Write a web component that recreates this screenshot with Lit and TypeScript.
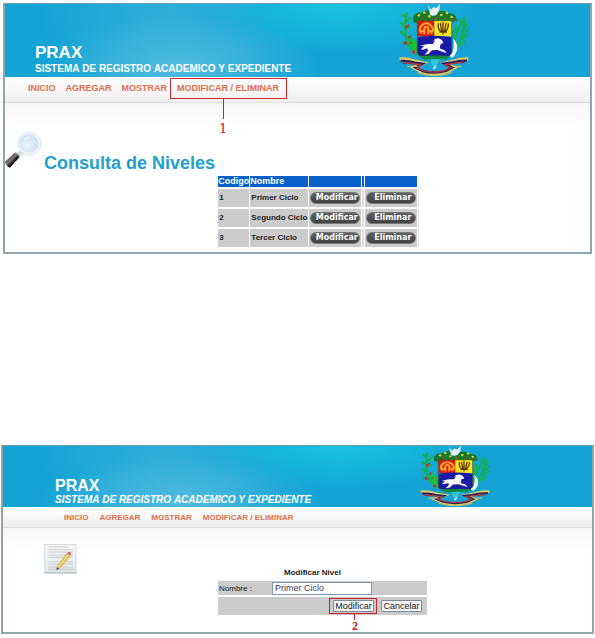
import { LitElement, html, css } from "lit";
import { customElement, property } from "lit/decorators.js";

@customElement("national-crest")
class NationalCrest extends LitElement {
  static styles = css`
    :host { display: block; width: 70px; }
    svg { display: block; width: 100%; height: 100%; }
  `;
  render() {
    return html`<svg viewBox="0 0 210 216" preserveAspectRatio="none" role="img" aria-label="Escudo">
      <g fill="none" stroke="#18b04a" stroke-linecap="round">
        <path stroke-width="7" d="M50 150C20 125 12 85 22 28M22 40l-12-8M20 55l14-12M17 66L5 58M17 80l15-12M18 94L6 84M23 110l14-14M27 122l-17-8M37 137l14-18"/>
        <path stroke-width="6" d="M160 140C185 120 196 85 196 42M164 130C168 95 178 70 190 52M188 80l16-18M185 98l22-22M180 112l26-20M172 130l26-18M172 82l-4-16M166 108l-4-28M190 60l-6-14"/>
      </g>
      <path d="M30 106c12-8 22 4 25 14v32c-16-4-22-19-25-46z" fill="#18c238"/>
      <g fill="#b8324a"><circle cx="22" cy="69" r="5"/><circle cx="31" cy="99" r="4"/><circle cx="19" cy="117" r="5"/><circle cx="44" cy="144" r="5"/><circle cx="28" cy="64" r="3"/><circle cx="36" cy="116" r="3"/></g>
      <path d="M42 40q4-16 26-14l14-8 25 6 26-4 16 8q20 0 22 14l4 8-12 4-10-4H64l-12 8-10-4z" fill="#137a2c"/>
      <g fill="#e8c832"><circle cx="60" cy="34" r="4"/><circle cx="76" cy="26" r="4"/><circle cx="91" cy="37" r="4"/><circle cx="127" cy="33" r="4"/><circle cx="144" cy="27" r="4"/><circle cx="158" cy="39" r="4"/></g>
      <g fill="#cf332c"><circle cx="69" cy="43" r="3"/><circle cx="110" cy="44" r="4"/><circle cx="140" cy="43" r="3"/><circle cx="167" cy="48" r="3"/></g>
      <path d="M86 3l10 14 7-8 8 4 12-12-2 17-8 14q-12 6-20 0l-2-14z" fill="#e6eff6"/>
      <path d="M55 50h51v47H55z" fill="#dd1713"/>
      <path d="M106 50h52v47h-52z" fill="#ffe51b"/>
      <path d="M55 100q51-9 103 0v45q0 11-11 11H66q-11 0-11-11z" fill="#1b1aa5"/>
      <path d="M55 50v95q0 11 11 11h81q11 0 11-11V50z" fill="none" stroke="#36551e" stroke-width="2"/>
      <path d="M69 88q-10-6-5-18 8-12 18-12t18 12q5 12-5 18M76 91V75a6 7 0 0 1 12 0v16M66 81h11m10 0h12" fill="none" stroke="#ffa326" stroke-width="6"/>
      <path d="M118 58q-3 22 14 27 17-5 16-27M132 54v38M124 57l5 29M141 57l-5 29M121 84h23" fill="none" stroke="#5b3a15" stroke-width="4"/>
      <path d="M119 103l10 5 4 10-8 1-3 14 14 6 8 9-14-5-14-5-17 1-10 10-12 3 10-12-2-7-12 4-8-1 11-9-12-1 11-4 14-2 13 0 6-11-6 1 7-6z" fill="#fff"/>
      <path d="M163 104c18 18 13 39 0 55-5 3-12 0-9-6 9-7 12-25 9-49z" fill="#f0faff"/>
      <g fill="none">
        <path d="M2 165q22-2 44 6l28 6-30 14 24 12q39 12 76 0l22-12-29-13 25-6q24-9 46-7" stroke="#e6c95c" stroke-width="10"/>
        <path d="M5 171q23-1 43 5l23 3-22 12 21 10q37 10 71 0l19-10-25-12 25-4q24-6 44-5" stroke="#29255c" stroke-width="7"/>
        <path d="M12 178q20-1 36 2l17 2-11 10 20 8q32 8 62 0l18-9-16-9 21-3q18-3 38-3" stroke="#b7333e" stroke-width="4"/>
        <path d="M25 187h30m104 0h28M55 206q50 18 103 0" stroke="#dfc35b" stroke-width="3"/>
      </g>
      <path d="M60 158q48-7 94 0l-13 8q-34-3-65 1z" fill="#11893e"/>
      <path d="M95 166h27l-8 16-8 9-9-11z" fill="#38c2d8"/>
      <path d="M103 195l8-9" stroke="#fff" stroke-width="4"/>
    </svg>`;
  }
}

@customElement("site-top")
class SiteTop extends LitElement {
  @property({ type: Boolean, reflect: true }) compact = false;
  @property({ type: Boolean }) marked = false;

  static styles = css`
    :host { display: block; font-family: "Liberation Sans", Arial, sans-serif; }
    .banner {
      display: flex; justify-content: space-between; align-items: flex-end;
      padding: 0 0 1px 30px;
      background:
        radial-gradient(ellipse 24% 70% at 57% 0%, #19c3df 0%, #19c3df00 100%),
        radial-gradient(ellipse 24% 75% at 30% 90%, #5fc0e4cc 0%, #5fc0e400 100%),
        radial-gradient(ellipse 22% 100% at 28% 15%, #3fb3dbaa 0%, #3fb3db00 100%),
        #13a4d5;
    }
    national-crest { height: 72px; margin-right: 21.8%; flex: none; }
    .names { color: #fff; white-space: nowrap; padding-bottom: 1px; font-weight: bold; }
    .brand { margin: 0; font-size: 17px; line-height: 20px; }
    .tag { margin: 0; font-size: 10px; line-height: 12px; font-kerning: none; }
    .menu {
      display: flex; gap: 10px; padding: 1px 0 4px 23px;
      background: linear-gradient(#fff, #efefef); border-bottom: 1px solid #dedede;
      font-size: 9px; line-height: 20px; font-weight: bold; white-space: nowrap;
    }
    .item { position: relative; }
    a { color: #de6f4e; text-decoration: none; }
    .frame { position: absolute; inset: 0 -8px -1px -7px; border: 1px solid #d8282c; pointer-events: none; }
    .callout {
      position: absolute; top: 21px; left: 40px; width: 12px;
      display: flex; flex-direction: column; align-items: center;
      color: #c8202c; font: 13px/20px "DejaVu Serif", serif;
    }
    .stem { width: 1px; height: 20px; background: #c8202c; }
    :host([compact]) .banner { padding-left: 52px; }
    :host([compact]) national-crest { height: 60px; margin-right: 19%; }
    :host([compact]) .names { padding-bottom: 0; }
    :host([compact]) .brand { font-size: 16px; line-height: 16px; }
    :host([compact]) .tag { font-style: italic; }
    :host([compact]) .menu { gap: 11px; padding: 2px 0 0 61px; font-size: 8px; line-height: 18px; }
  `;

  render() {
    return html`
      <header class="banner">
        <div class="names">
          <p class="brand">PRAX</p>
          <p class="tag">SISTEMA DE REGISTRO ACADEMICO Y EXPEDIENTE</p>
        </div>
        <national-crest></national-crest>
      </header>
      <nav class="menu">
        <a href="#inicio">INICIO</a>
        <a href="#agregar">AGREGAR</a>
        <a href="#mostrar">MOSTRAR</a>
        <span class="item"><a href="#modificar">MODIFICAR / ELIMINAR</a>${this.marked
          ? html`<span class="frame"></span><span class="callout"><span class="stem"></span>1</span>`
          : ""}</span>
      </nav>`;
  }
}

@customElement("app-root")
class AppRoot extends LitElement {
  private levels = ["Primer Ciclo", "Segundo Ciclo", "Tercer Ciclo"];

  static styles = css`
    :host {
      display: block; padding: 3px 0; background: #fff; color: #222;
      font-family: "Liberation Sans", Arial, sans-serif;
    }
    * { box-sizing: border-box; }
    .panel {
      border: 2px solid #91a6aa; border-top: 1px solid #6f9db0;
      background: #fff;
    }
    .list { margin: 0 3px 191px; }
    .edit { margin: 0 1px; }
    .body { background: linear-gradient(#f6f6f6, #fff 22px); }
    .list .body { padding: 28px 0 3px; }
    .heading { display: flex; align-items: flex-end; gap: 1px; padding-bottom: 4px; }
    .heading svg { align-self: flex-start; flex: none; }
    h1 { margin: 0; font-size: 18px; line-height: 12px; color: #249fce; }
    .levels {
      margin: 1px 0 0 36.3%; width: 203px; table-layout: fixed;
      border-spacing: 1px 2px; font-size: 8px; font-weight: bold;
    }
    th, td { padding: 0 1px; text-align: left; white-space: nowrap; }
    th { height: 11px; font-size: 9px; line-height: 11px; background: #0861c9; color: #fff; padding: 0; }
    th.edge { background: none; }
    td { height: 18px; background: #cbcbcb; line-height: 16px; }
    .c1 { width: 31px; } .c2 { width: 58px; } .c3 { width: 52px; } .c4 { width: 2px; } .c5 { width: 1px; }
    td.thin, th.thin { padding: 0; }
    td.thin { background: #dedede; }
    .pill {
      display: block; width: 50px; height: 12px; padding: 0 0 0 3px; margin: 0;
      border: 1px solid #777; border-radius: 6px; background: linear-gradient(#606060, #424242);
      color: #fff; font: bold 8px/10px "DejaVu Sans", Verdana, sans-serif; text-align: center;
    }
    .edit .body { display: grid; grid-template-columns: 36.5% 1fr; padding: 16px 0 17px; }
    .note { margin-left: 41px; }
    .form { width: 209px; padding-top: 23px; font-size: 8px; }
    h2 { margin: 0 20px 2px 0; font-size: 8px; line-height: 12px; text-align: center; }
    .row { display: flex; align-items: center; background: #cbcbcb; }
    .field { height: 14px; padding-left: 1px; margin-bottom: 2px; }
    label { width: 53px; }
    input {
      width: 100px; height: 13px; border: 1px solid #8295ac; background: #fff; padding: 0 2px;
      font: 9px/11px "Liberation Sans", Arial, sans-serif; color: #433a50;
    }
    .actions { height: 18px; justify-content: flex-end; gap: 7px; padding-right: 5px; }
    .push {
      display: block; width: 41px; height: 12px; padding: 0; border: 1px solid #7b8b9b; border-radius: 1px;
      background: #f6f6f4; color: #222; font: 9px/10px "Liberation Sans", Arial, sans-serif;
    }
    .target { position: relative; }
    .frame { position: absolute; inset: -2px -3px -2px -4px; border: 1px solid #c8202c; pointer-events: none; }
    .callout {
      position: absolute; top: 14px; left: 16px; width: 12px;
      display: flex; flex-direction: column; align-items: center;
      color: #c8202c; font: bold 12px/12px "Liberation Serif", serif;
    }
    .stem { width: 1px; height: 6px; background: #c8202c; }
  `;

  render() {
    return html`
      <section class="panel list">
        <site-top marked></site-top>
        <div class="body">
          <div class="heading">
            <svg width="38" height="38" viewBox="0 0 114 114" aria-hidden="true">
              <defs>
                <radialGradient id="lens" cx=".4" cy=".6"><stop offset="0" stop-color="#e6f4fc"/><stop offset="1" stop-color="#cfe5f3"/></radialGradient>
                <linearGradient id="grip" x1="0" y1="0" x2="1" y2="1"><stop offset="0" stop-color="#222"/><stop offset=".45" stop-color="#777"/><stop offset=".6" stop-color="#111"/><stop offset="1" stop-color="#333"/></linearGradient>
              </defs>
              <path d="M36 67l12-12 9 9-13 13z" fill="#d5d9db"/>
              <circle cx="73" cy="38" r="35" fill="#f0f3f5" stroke="#e6eaed" stroke-width="3"/>
              <circle cx="72" cy="37" r="27" fill="url(#lens)" stroke="#d6e2ea" stroke-width="2"/>
              <path d="M55 28q10-14 25-10-18 3-25 10z" fill="#fff"/>
              <path d="M0 92l29-27q10 2 15 13L15 110Q3 105 0 92z" fill="url(#grip)"/>
              <path d="M29 65q10 2 15 13" fill="none" stroke="#aaa" stroke-width="4"/>
            </svg>
            <h1>Consulta de Niveles</h1>
          </div>
          <table class="levels">
            <thead>
              <tr>
                <th class="c1">Codigo</th><th class="c2">Nombre</th><th class="c3"></th>
                <th class="c4 thin"></th><th class="c3"></th><th class="c5 thin edge"></th>
              </tr>
            </thead>
            <tbody>
              ${this.levels.map((name, i) => html`<tr>
                <td>${i + 1}</td><td>${name}</td>
                <td><button class="pill">Modificar</button></td><td class="thin"></td>
                <td><button class="pill">Eliminar</button></td><td class="thin"></td>
              </tr>`)}
            </tbody>
          </table>
        </div>
      </section>

      <section class="panel edit">
        <site-top compact></site-top>
        <div class="body">
          <svg class="note" width="33" height="30" viewBox="0 0 99 90" aria-hidden="true">
            <defs><linearGradient id="paper" x1="0" y1="0" x2="0" y2="1"><stop offset="0" stop-color="#f8f9f9"/><stop offset="1" stop-color="#e0e7eb"/></linearGradient></defs>
            <path d="M2 2h94v84H2z" fill="url(#paper)" stroke="#bdc5c9" stroke-width="2"/>
            <path d="M0 87h99" stroke="#adb5b8" stroke-width="3"/>
            <path d="M13 9h62M13 17h74M13 24h74M13 33h74M13 40h74M13 53h74M13 60h74M13 69h74M13 76h74" stroke="#b6bcc0" stroke-width="2"/>
            <path d="M39 68L69 28l10 7-31 38-10 4z" fill="#ecc65c" stroke="#b18d38" stroke-width="1"/>
            <path d="M44 69l29-38" stroke="#fbe69a" stroke-width="3"/>
            <path d="M69 28l4-4q5-1 9 4l-3 7z" fill="#c5688a"/>
            <path d="M39 70l-1 7 7-3z" fill="#333"/>
          </svg>
          <form class="form" @submit=${(e: Event) => e.preventDefault()}>
            <h2>Modificar Nivel</h2>
            <div class="row field">
              <label for="nombre">Nombre :</label>
              <input id="nombre" type="text" value="Primer Ciclo">
            </div>
            <div class="row actions">
              <div class="target">
                <button class="push" type="submit">Modificar</button>
                <span class="frame"></span>
                <span class="callout"><span class="stem"></span>2</span>
              </div>
              <button class="push" type="button">Cancelar</button>
            </div>
          </form>
        </div>
      </section>`;
  }
}
